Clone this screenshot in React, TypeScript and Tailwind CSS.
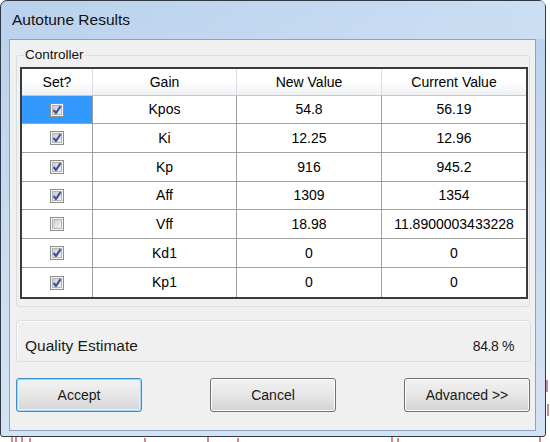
type Row = { on: boolean; gain: string; nv: string; cv: string; h: string }

const rows: Row[] = [
  { on: true, gain: 'Kpos', nv: '54.8', cv: '56.19', h: 'h-[28px]' },
  { on: true, gain: 'Ki', nv: '12.25', cv: '12.96', h: 'h-[29px]' },
  { on: true, gain: 'Kp', nv: '916', cv: '945.2', h: 'h-[29px]' },
  { on: true, gain: 'Aff', nv: '1309', cv: '1354', h: 'h-[28px]' },
  { on: false, gain: 'Vff', nv: '18.98', cv: '11.8900003433228', h: 'h-[29px]' },
  { on: true, gain: 'Kd1', nv: '0', cv: '0', h: 'h-[29px]' },
  { on: true, gain: 'Kp1', nv: '0', cv: '0', h: 'h-[29px]' },
]

function CheckBox({ on }: { on: boolean }) {
  return (
    <svg width="14" height="14" viewBox="0 0 14 14">
      <defs>
        <linearGradient id="cbfill" x1="0" y1="0" x2="1" y2="1">
          <stop offset="0" stopColor="#c9c9c9" />
          <stop offset="1" stopColor="#f6f6f6" />
        </linearGradient>
      </defs>
      <rect x="0.5" y="0.5" width="13" height="13" fill="#f2f2f2" stroke="#8e8f8f" />
      <rect x="2.5" y="2.5" width="9" height="9" fill="url(#cbfill)" stroke="#b5b5b5" />
      {on && (
        <path d="M3.6 7 L6 10 L10.6 3.2" fill="none" stroke="#3f52a3" strokeWidth="2.2" strokeLinejoin="round" />
      )}
    </svg>
  )
}

function WinButton({ label, focused }: { label: string; focused?: boolean }) {
  return (
    <button
      type="button"
      className={
        focused
          ? 'h-[34px] w-[126px] rounded-[3px] border border-[#3c8fc8] bg-gradient-to-b from-[#f4f4f4] via-[#e6e6e6] to-[#d6d6d6] text-[14px] text-[#1a1a1a] shadow-[inset_0_0_0_1px_#9fd8f7,inset_0_0_0_2px_#e2f4fd]'
          : 'h-[34px] w-[126px] rounded-[3px] border border-[#707070] bg-gradient-to-b from-[#f2f2f2] via-[#e6e6e6] to-[#d3d3d3] text-[14px] text-[#1a1a1a] shadow-[inset_0_0_0_1px_#fbfbfb]'
      }
    >
      {label}
    </button>
  )
}

export default function App() {
  return (
    <div className="relative h-[442px] w-[550px] overflow-hidden bg-white font-['Liberation_Sans',Arial,sans-serif]">
      {/* plot fragments behind the dialog */}
      <svg className="absolute inset-0" width="550" height="442" viewBox="0 0 550 442">
        <path d="M55 0 V3 H61 V0 M246 0 V3 H250 V0" fill="none" stroke="#3a4fb0" strokeWidth="1" />
        <path d="M12 437 V442 M16 437 V442 M22 437 V442 M30 438 V442 M145 438 V442 M208 437 V442 M238 438 V442 M392 437 V442 M398 438 V442 M540 437 V442 M547 380 V392 M548 404 V416" stroke="#a8121a" strokeWidth="1" />
      </svg>

      <div className="relative flex h-[437px] w-[546px] flex-col rounded-t-[7px] rounded-b-[3px] border border-[#2f3a46] bg-gradient-to-b from-[#b9d1ec] via-[#c7dbf1] to-[#d4e3f3]">
        <div className="flex h-[38px] items-center bg-gradient-to-r from-transparent to-[#d6e7f8]/60 pl-[11px] text-[15.5px] text-[#111]">
          Autotune Results
        </div>

        <div className="ml-[8px] mr-[9px] flex h-[392px] flex-col border border-[#8da3bd] bg-[#f0f0f0] pl-[6px]">
          <div className="relative mt-[15px] w-[514px] rounded-[3px] border border-[#d5dfe5] pb-[7px] pl-[3px] pt-[11px]">
            <span className="absolute -top-[9px] left-[7px] bg-[#f0f0f0] px-[1px] text-[13.5px] leading-[16px] text-[#111]">
              Controller
            </span>

            <div className="w-[508px] border-2 border-[#3b3b3b] bg-white text-[14px] text-black">
              <div className="grid h-[27px] grid-cols-[71px_144px_145px_144px] border-b border-[#c8c8c8] bg-gradient-to-b from-white from-50% to-[#eef0f2]">
                <div className="flex items-center justify-center border-r border-[#dadfe5]">Set?</div>
                <div className="flex items-center justify-center border-r border-[#dadfe5]">Gain</div>
                <div className="flex items-center justify-center border-r border-[#dadfe5]">New Value</div>
                <div className="flex items-center justify-center">Current Value</div>
              </div>

              {rows.map((r, i) => (
                <div
                  key={r.gain}
                  className={`grid grid-cols-[71px_144px_145px_144px] ${r.h} ${i < rows.length - 1 ? 'border-b border-[#a0a0a0]' : ''}`}
                >
                  <div
                    className={`flex items-center justify-center border-r border-[#a0a0a0] ${i === 0 ? 'bg-[#3399ff]' : ''}`}
                  >
                    <CheckBox on={r.on} />
                  </div>
                  <div className="flex items-center justify-center border-r border-[#a0a0a0]">{r.gain}</div>
                  <div className="flex items-center justify-center border-r border-[#a0a0a0]">{r.nv}</div>
                  <div className="flex items-center justify-center">{r.cv}</div>
                </div>
              ))}
            </div>
          </div>

          <div className="mt-[13px] flex h-[42px] w-[515px] items-end justify-between rounded-[3px] border border-[#d8e0e6] pb-[6px] pl-[8px] pr-[16px] shadow-[inset_1px_1px_0_#fafafa]">
            <span className="text-[15.5px] leading-[18px] text-[#1a1a1a]">Quality Estimate</span>
            <span className="text-[14px] leading-[18px] tracking-[-0.4px] text-[#1a1a1a]">84.8 %</span>
          </div>

          <div className="mt-[16px] flex gap-[68px]">
            <WinButton label="Accept" focused />
            <WinButton label="Cancel" />
            <WinButton label="Advanced >>" />
          </div>
        </div>
      </div>
    </div>
  )
}
